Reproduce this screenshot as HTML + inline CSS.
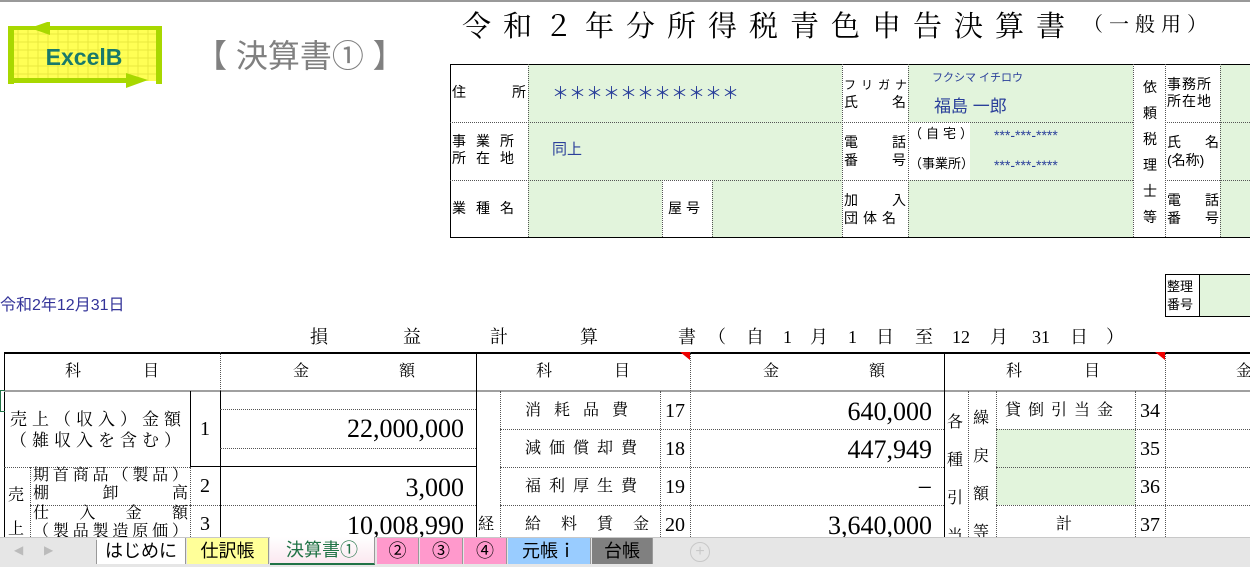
<!DOCTYPE html>
<html style="height:567px;overflow:hidden"><head><meta charset="utf-8"><style>
*{margin:0;padding:0;box-sizing:border-box}
body{width:1250px;height:567px;overflow:hidden;background:#fff;position:relative;font-family:"Liberation Serif","Noto Serif CJK SC",serif;color:#000}
.a{position:absolute}
.g{background:#e2f4dc}
.hl{position:absolute;height:0;border-top:1px dotted #555}
.vl{position:absolute;width:0;border-left:1px dotted #555}
.HL{position:absolute;height:0;border-top:1px solid #000}
.VL{position:absolute;width:0;border-left:1px solid #000}
.s{font-family:"Liberation Sans","Noto Sans CJK JP",sans-serif;font-size:13px;line-height:16px}
.m{font-family:"Liberation Serif","Noto Serif CJK SC",serif;font-size:16px;line-height:20px;white-space:nowrap}
.num{font-family:"Liberation Serif",serif;font-size:26px;text-align:right;line-height:30px}
.bl{color:#2a3f9a}
.fx{display:flex;justify-content:space-between}
.tab{position:absolute;top:538px;height:26px;font-family:"Liberation Sans","Noto Sans CJK JP",sans-serif;font-size:18px;line-height:26px;text-align:center;border-right:1px solid #999}
#clip{position:absolute;left:0;top:0;width:1250px;height:537px;overflow:hidden}
.t{position:absolute;top:325px;font-size:18px;line-height:24px;font-family:"Liberation Serif","Noto Serif CJK SC",serif;white-space:nowrap}
</style></head><body>
<div id="clip">
<div class="a" style="left:0;top:0;width:1250px;height:2px;background:#999"></div>

<!-- logo -->
<svg class="a" style="left:8px;top:22px" width="156" height="66">
<rect x="2" y="4" width="150" height="55" fill="#ffff55"/>
<g stroke="#e8e840" stroke-width="1">
<path d="M2 12H152M2 20H152M2 28H152M2 36H152M2 44H152M2 52H152M10 4V59M20 4V59M30 4V59M40 4V59M50 4V59M60 4V59M70 4V59M80 4V59M90 4V59M100 4V59M110 4V59M120 4V59M130 4V59M140 4V59"/></g>
<rect x="0" y="4" width="6" height="58" fill="#a8d800"/>
<rect x="0" y="4" width="152" height="4" fill="#a8d800"/>
<polygon points="22,6 42,-1 42,13" fill="#a8d800"/>
<rect x="148" y="4" width="6" height="58" fill="#a8d800"/>
<rect x="0" y="56" width="130" height="5" fill="#a8d800"/>
<polygon points="140,58 118,51 118,66" fill="#a8d800"/>
<text x="76" y="43" text-anchor="middle" font-family="Liberation Sans,sans-serif" font-weight="bold" font-size="23" fill="#1a7a6a">ExcelB</text>
</svg>
<div class="a" style="left:195px;top:36px;font-family:'Liberation Sans','Noto Sans CJK JP',sans-serif;font-size:32px;color:#808080;white-space:nowrap;line-height:40px">【 決算書① 】</div>

<!-- big title -->
<div class="a" style="left:462px;top:6px;font-size:29px;letter-spacing:12px;line-height:38px;white-space:nowrap;font-family:'Noto Serif CJK SC',serif">令和２年分所得税青色申告決算書</div>
<div class="a" style="left:1083px;top:10px;font-size:20px;letter-spacing:6px;line-height:30px;white-space:nowrap">（一般用）</div>

<!-- info table -->
<div class="a g" style="left:528px;top:64px;width:314px;height:116px"></div>
<div class="a g" style="left:528px;top:180px;width:134px;height:57px"></div>
<div class="a g" style="left:712px;top:180px;width:130px;height:57px"></div>
<div class="a g" style="left:908px;top:64px;width:225px;height:58px"></div>
<div class="a g" style="left:970px;top:122px;width:163px;height:58px"></div>
<div class="a g" style="left:908px;top:180px;width:225px;height:57px"></div>
<div class="a g" style="left:1220px;top:64px;width:30px;height:173px"></div>
<div class="a" style="left:450px;top:64px;width:810px;height:174px;border:1.5px solid #000"></div>
<div class="hl" style="left:450px;top:122px;width:683px"></div>
<div class="hl" style="left:450px;top:180px;width:683px"></div>
<div class="hl" style="left:1165px;top:122px;width:85px"></div>
<div class="hl" style="left:1165px;top:180px;width:85px"></div>
<div class="vl" style="left:528px;top:64px;height:173px"></div>
<div class="vl" style="left:662px;top:180px;height:57px"></div>
<div class="vl" style="left:712px;top:180px;height:57px"></div>
<div class="vl" style="left:842px;top:64px;height:173px"></div>
<div class="vl" style="left:908px;top:64px;height:173px"></div>
<div class="vl" style="left:1133px;top:64px;height:173px"></div>
<div class="vl" style="left:1165px;top:64px;height:173px"></div>
<div class="vl" style="left:1220px;top:64px;height:173px"></div>

<div class="a s fx" style="left:452px;top:84px;width:74px;font-size:14px"><span>住</span><span>所</span></div>
<div class="a s" style="left:452px;top:133px;width:74px;letter-spacing:10px;font-size:14px;line-height:17px">事業所<br>所在地</div>
<div class="a s" style="left:452px;top:200px;width:74px;letter-spacing:10px;font-size:14px">業種名</div>
<div class="a s" style="left:668px;top:200px;letter-spacing:4px;font-size:14px">屋号</div>
<div class="a s" style="left:844px;top:77px;font-size:12px;letter-spacing:5px">フリガナ</div>
<div class="a s fx" style="left:844px;top:94px;width:62px;font-size:14px"><span>氏</span><span>名</span></div>
<div class="a s" style="left:844px;top:133px;width:62px;line-height:18px;font-size:14px"><div class="fx"><span>電</span><span>話</span></div><div class="fx"><span>番</span><span>号</span></div></div>
<div class="a s" style="left:844px;top:191px;width:62px;line-height:18px;font-size:14px"><div class="fx"><span>加</span><span>入</span></div><div style="letter-spacing:5px">団体名</div></div>
<div class="a s" style="left:909px;top:126px;font-size:13px;letter-spacing:4px">（自宅）</div>
<div class="a s" style="left:909px;top:156px;font-size:13px">（事業所）</div>
<div class="a s" style="left:1140px;top:74px;width:20px;line-height:26px;text-align:center;font-size:14px">依<br>頼<br>税<br>理<br>士<br>等</div>
<div class="a s" style="left:1167px;top:76px;letter-spacing:1px;font-size:14px;line-height:17px">事務所<br>所在地</div>
<div class="a s" style="left:1167px;top:133px;width:52px;font-size:14px;line-height:18px"><div class="fx"><span>氏</span><span>名</span></div>(名称)</div>
<div class="a s" style="left:1167px;top:191px;width:52px;font-size:14px;line-height:18px"><div class="fx"><span>電</span><span>話</span></div><div class="fx"><span>番</span><span>号</span></div></div>

<div class="a s bl" style="left:552px;top:84px;font-size:17px;line-height:20px">＊＊＊＊＊＊＊＊＊＊＊</div>
<div class="a s bl" style="left:932px;top:70px;font-size:11px">フクシマ イチロウ</div>
<div class="a s bl" style="left:934px;top:96px;font-size:17px;line-height:22px">福島 一郎</div>
<div class="a s bl" style="left:552px;top:142px;font-size:15px">同上</div>
<div class="a s bl" style="left:994px;top:127px;font-size:14px">***-***-****</div>
<div class="a s bl" style="left:994px;top:157px;font-size:14px">***-***-****</div>

<!-- 整理番号 -->
<div class="a g" style="left:1200px;top:274px;width:50px;height:42px"></div>
<div class="a" style="left:1165px;top:274px;width:90px;height:43px;border:1px solid #000"></div>
<div class="VL" style="left:1199px;top:274px;height:43px"></div>
<div class="a s" style="left:1167px;top:278px;line-height:18px">整理<br>番号</div>

<div class="a s" style="left:0;top:295px;font-size:16px;color:#333399;line-height:22px">令和2年12月31日</div>
<div class="t" style="left:310px">損</div>
<div class="t" style="left:403px">益</div>
<div class="t" style="left:490px">計</div>
<div class="t" style="left:580px">算</div>
<div class="t" style="left:678px">書</div>
<div class="t" style="left:708px">（</div>
<div class="t" style="left:746px">自</div>
<div class="t" style="left:783px">1</div>
<div class="t" style="left:810px">月</div>
<div class="t" style="left:848px">1</div>
<div class="t" style="left:876px">日</div>
<div class="t" style="left:915px">至</div>
<div class="t" style="left:952px">12</div>
<div class="t" style="left:990px">月</div>
<div class="t" style="left:1032px">31</div>
<div class="t" style="left:1070px">日</div>
<div class="t" style="left:1106px">）</div>

<!-- main table -->
<div class="HL" style="left:4px;top:352px;width:1246px;border-top-width:2px"></div>
<div class="VL" style="left:4px;top:352px;height:185px"></div>
<div class="a" style="left:4px;top:390px;width:1246px;height:2px;background:#a0a0a0"></div>
<div class="vl" style="left:220px;top:352px;height:39px"></div>
<div class="VL" style="left:476px;top:352px;height:185px"></div>
<div class="vl" style="left:690px;top:352px;height:185px"></div>
<div class="VL" style="left:944px;top:352px;height:185px"></div>
<div class="vl" style="left:1165px;top:352px;height:185px"></div>
<svg class="a" style="left:680px;top:352px" width="10" height="8"><polygon points="0,0 10,0 10,8" fill="#e00"/></svg>
<svg class="a" style="left:1155px;top:352px" width="10" height="8"><polygon points="0,0 10,0 10,8" fill="#e00"/></svg>

<div class="a m" style="left:65px;top:362px;letter-spacing:62px">科目</div>
<div class="a m" style="left:293px;top:362px;letter-spacing:90px">金額</div>
<div class="a m" style="left:536px;top:362px;letter-spacing:62px">科目</div>
<div class="a m" style="left:763px;top:362px;letter-spacing:90px">金額</div>
<div class="a m" style="left:1006px;top:362px;letter-spacing:62px">科目</div>
<div class="a m" style="left:1236px;top:362px">金</div>

<!-- left section -->
<div class="VL" style="left:190px;top:391px;height:76px"></div>
<div class="VL" style="left:220px;top:391px;height:146px"></div>
<div class="hl" style="left:220px;top:409px;width:256px"></div>
<div class="hl" style="left:220px;top:448px;width:256px"></div>
<div class="HL" style="left:190px;top:466px;width:286px"></div>
<div class="hl" style="left:4px;top:467px;width:186px"></div>
<div class="hl" style="left:190px;top:505px;width:286px"></div>
<div class="hl" style="left:30px;top:505px;width:160px"></div>
<div class="vl" style="left:30px;top:467px;height:70px"></div>
<div class="vl" style="left:190px;top:467px;height:70px"></div>
<div class="a" style="left:0;top:390px;width:5px;height:22px;border:1.5px solid #217346;border-right:none"></div>
<div class="a m" style="left:10px;top:409px;font-size:17px;line-height:21px;letter-spacing:5px">売上（収入）金額<br>（雑収入を含む）</div>
<div class="a m" style="left:200px;top:419px;font-size:20px">1</div>
<div class="a num" style="left:220px;top:414px;width:244px">22,000,000</div>
<div class="a m" style="left:8px;top:486px">売</div>
<div class="a m" style="left:33px;top:467px;width:155px;font-size:16px;line-height:18px"><div class="fx"><span>期</span><span>首</span><span>商</span><span>品</span><span>（</span><span>製</span><span>品</span><span>）</span></div><div class="fx"><span>棚</span><span>卸</span><span>高</span></div></div>
<div class="a m" style="left:33px;top:505px;width:155px;font-size:16px;line-height:18px"><div class="fx"><span>仕</span><span>入</span><span>金</span><span>額</span></div><div class="fx"><span>（</span><span>製</span><span>品</span><span>製</span><span>造</span><span>原</span><span>価</span><span>）</span></div></div>
<div class="a m" style="left:8px;top:520px">上</div>
<div class="a m" style="left:200px;top:476px;font-size:20px">2</div>
<div class="a m" style="left:200px;top:514px;font-size:20px">3</div>
<div class="a num" style="left:220px;top:473px;width:244px">3,000</div>
<div class="a num" style="left:220px;top:511px;width:244px">10,008,990</div>

<!-- middle section -->
<div class="vl" style="left:500px;top:391px;height:146px"></div>
<div class="vl" style="left:660px;top:391px;height:146px"></div>
<div class="hl" style="left:500px;top:429px;width:444px"></div>
<div class="hl" style="left:500px;top:467px;width:444px"></div>
<div class="hl" style="left:500px;top:505px;width:444px"></div>
<div class="a m" style="left:478px;top:515px">経</div>
<div class="a m" style="left:525px;top:401px;letter-spacing:13px">消耗品費</div>
<div class="a m" style="left:525px;top:439px;letter-spacing:8px">減価償却費</div>
<div class="a m" style="left:525px;top:477px;letter-spacing:8px">福利厚生費</div>
<div class="a m" style="left:525px;top:515px;letter-spacing:20px">給料賃金</div>
<div class="a m" style="left:665px;top:399px;font-size:20px;line-height:24px">17</div>
<div class="a m" style="left:665px;top:437px;font-size:20px;line-height:24px">18</div>
<div class="a m" style="left:665px;top:475px;font-size:20px;line-height:24px">19</div>
<div class="a m" style="left:665px;top:513px;font-size:20px;line-height:24px">20</div>
<div class="a num" style="left:690px;top:397px;width:242px">640,000</div>
<div class="a num" style="left:690px;top:435px;width:242px">447,949</div>
<div class="a num" style="left:690px;top:473px;width:242px">−</div>
<div class="a num" style="left:690px;top:511px;width:242px">3,640,000</div>

<!-- right section -->
<div class="g a" style="left:996px;top:429px;width:139px;height:76px"></div>
<div class="vl" style="left:968px;top:391px;height:146px"></div>
<div class="vl" style="left:996px;top:391px;height:146px"></div>
<div class="vl" style="left:1135px;top:391px;height:146px"></div>
<div class="hl" style="left:996px;top:429px;width:254px"></div>
<div class="hl" style="left:996px;top:467px;width:254px"></div>
<div class="hl" style="left:996px;top:505px;width:254px"></div>
<div class="hl" style="left:1165px;top:429px;width:85px"></div>
<div class="a m" style="left:947px;top:404px;line-height:38px">各<br>種<br>引<br>当<br>金</div>
<div class="a m" style="left:973px;top:400px;line-height:38px">繰<br>戻<br>額<br>等</div>
<div class="a m" style="left:1005px;top:401px;letter-spacing:7px">貸倒引当金</div>
<div class="a m" style="left:1056px;top:515px">計</div>
<div class="a m" style="left:1140px;top:399px;font-size:20px;line-height:24px">34</div>
<div class="a m" style="left:1140px;top:437px;font-size:20px;line-height:24px">35</div>
<div class="a m" style="left:1140px;top:475px;font-size:20px;line-height:24px">36</div>
<div class="a m" style="left:1140px;top:513px;font-size:20px;line-height:24px">37</div>
</div>

<!-- tab bar -->
<div class="a" style="left:0;top:537px;width:1250px;height:30px;background:#e6e6e6;border-top:1px solid #c8c8c8"></div>
<div class="a" style="left:14px;top:543px;color:#bbb;font-size:12px;font-family:'Liberation Sans',sans-serif">◀</div>
<div class="a" style="left:44px;top:543px;color:#bbb;font-size:12px;font-family:'Liberation Sans',sans-serif">▶</div>
<div class="a" style="left:96px;top:540px;width:1px;height:24px;background:#999"></div>
<div class="tab" style="left:97px;width:89px;background:#fff">はじめに</div>
<div class="tab" style="left:187px;width:82px;background:#ffff99">仕訳帳</div>
<div class="tab" style="left:270px;top:537px;height:28px;width:105px;background:linear-gradient(#fff,#fbe8f0);color:#217346;border-bottom:2px solid #217346">決算書①</div>
<div class="tab" style="left:377px;width:42px;background:#ff99cc">②</div>
<div class="tab" style="left:420px;width:43px;background:#ff99cc">③</div>
<div class="tab" style="left:464px;width:43px;background:#ff99cc">④</div>
<div class="tab" style="left:508px;width:83px;background:#99ccff">元帳ｉ</div>
<div class="tab" style="left:592px;width:61px;background:#808080">台帳</div>
<div class="a" style="left:690px;top:542px;width:20px;height:20px;border:1.5px solid #c8c8c8;border-radius:50%;color:#c8c8c8;text-align:center;font:16px/17px 'Liberation Sans',sans-serif">+</div>
</body></html>
